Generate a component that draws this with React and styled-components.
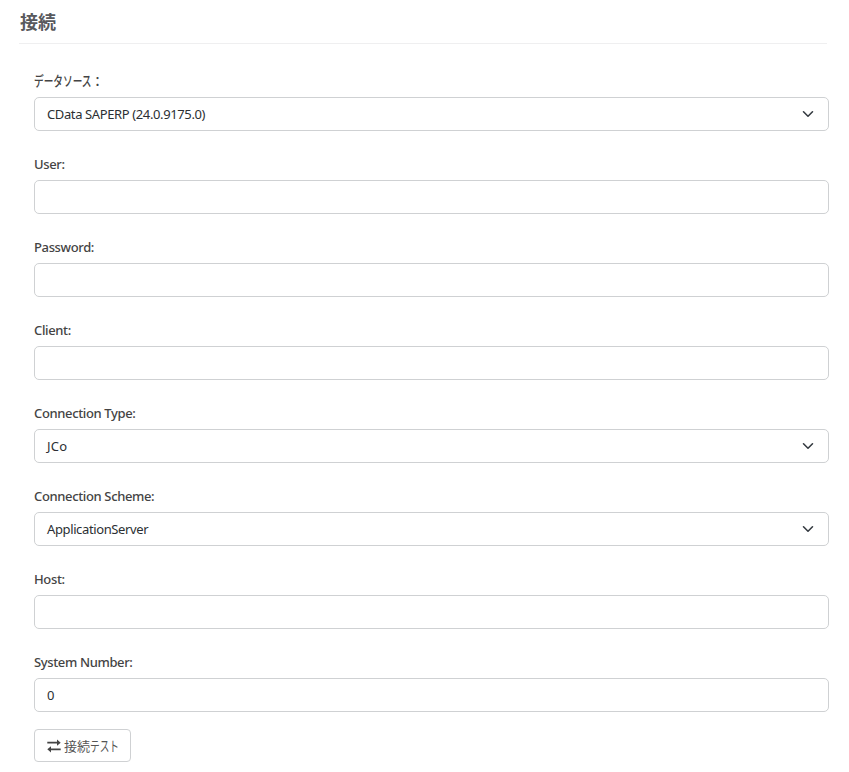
import React from 'react';
import styled, { createGlobalStyle } from 'styled-components';

const Global = createGlobalStyle`
  * { box-sizing: border-box; }
  body { margin: 0; background: #fff; color: #2b2f33; font-family: "Noto Sans", "Noto Sans CJK JP", sans-serif; font-size: 13px; }
`;
const Page = styled.main`
  padding: 9px 20px 0 18px;
  height: 772px;
  overflow: hidden;
`;
const Heading = styled.h1`
  margin: 0 2px 0 1px;
  padding-left: 1px;
  height: 35px;
  border-bottom: 1px solid #efeff0;
  font-size: 18px;
  line-height: 27px;
  font-weight: 700;
  color: #58595d;
`;
const Form = styled.form`
  padding: 27px 0 0 16px;
`;
const Field = styled.div`
  height: 83px;
`;
const Label = styled.label`
  display: flex;
  height: 26px;
  line-height: 20px;
  font-size: 13px;
  font-weight: 500;
  letter-spacing: -0.36px;
  color: #444;
  white-space: pre;
`;
const Control = styled.div`
  display: flex;
  align-items: center;
  justify-content: space-between;
  height: 34px;
  padding: 0 14px 0 12px;
  border: 1px solid #cfd1d3;
  border-radius: 5px;
`;
const Value = styled.span`
  letter-spacing: ${p => p.$spacing || '-0.38px'};
`;
const Kana = styled.span`
  display: inline-block;
  width: ${p => p.$width}px;
  font-size: 14px;
  letter-spacing: 0;
  white-space: nowrap;
  transform: scaleX(0.69);
  transform-origin: left;
`;
const Button = styled.button`
  display: flex;
  align-items: center;
  gap: 3px;
  width: 97px;
  height: 33px;
  margin-top: -6px;
  padding: 0 0 0 12px;
  border: 1px solid #cfd1d3;
  border-radius: 4px;
  background: #fff;
  color: #555;
  font: inherit;
`;
const ButtonText = styled.span`
  display: flex;
  align-items: baseline;
  line-height: 19px;
  white-space: nowrap;
`;

const Chevron = () => (
  <svg width="12" height="12" viewBox="0 0 16 16" fill="none" stroke="#343a40" strokeWidth="2.1" strokeLinecap="round" strokeLinejoin="round"><path d="m2 5 6 6 6-6" /></svg>
);
const Swap = () => (
  <svg width="14" height="14" viewBox="0 0 14 14" fill="#444">
    <path d="M.3 2.8H10V.6L13.7 3.7 10 6.8V4.6H.3ZM13.7 9.4H4V7.2L.3 10.3 4 13.4v-2.2h9.7Z" />
  </svg>
);

const fields = [
  { label: '：', kana: 'データソース', value: 'CData SAPERP (24.0.9175.0)', select: true },
  { label: 'User:' },
  { label: 'Password:' },
  { label: 'Client:' },
  { label: 'Connection Type:', value: 'JCo', select: true, spacing: '0.2px' },
  { label: 'Connection Scheme:', value: 'ApplicationServer', select: true },
  { label: 'Host:' },
  { label: 'System Number:', value: '0' },
];

export default function App() {
  return (
    <Page>
      <Global />
      <Heading>接続</Heading>
      <Form>
        {fields.map(f => (
          <Field key={f.label}>
            <Label>{f.kana && <Kana $width={57}>{f.kana}</Kana>}{f.label}</Label>
            <Control><Value $spacing={f.spacing}>{f.value}</Value>{f.select && <Chevron />}</Control>
          </Field>
        ))}
        <Button type="button"><Swap /><ButtonText>接続<Kana $width={29}>テスト</Kana></ButtonText></Button>
      </Form>
    </Page>
  );
}
